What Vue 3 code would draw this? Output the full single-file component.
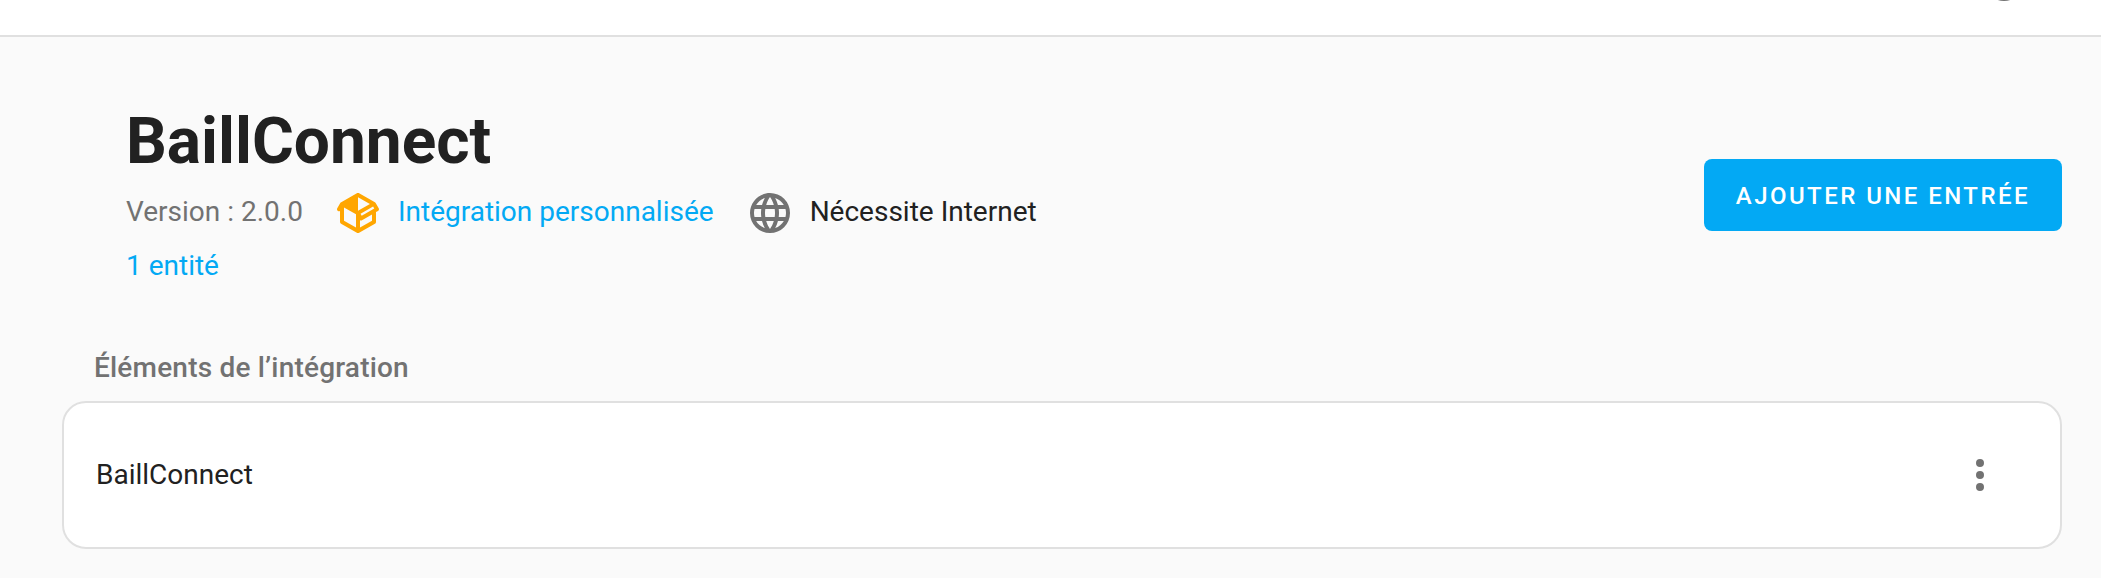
<template>
  <div class="page">
    <header class="toolbar">
      <svg class="toolbar__help" viewBox="0 0 24 24">
        <circle cx="12" cy="12" r="10" />
      </svg>
    </header>

    <main class="content">
      <section class="integration">
        <div class="integration__info">
          <h1 class="title">BaillConnect</h1>
          <div class="details">
            <span class="version">Version : {{ version }}</span>
            <span class="detail detail--custom">
              <svg class="icon" viewBox="0 0 24 24">
                <path :d="icons.package" />
              </svg>
              <a class="link">Intégration personnalisée</a>
            </span>
            <span class="detail">
              <svg class="icon" viewBox="0 0 24 24">
                <path :d="icons.web" />
              </svg>
              <span>Nécessite Internet</span>
            </span>
          </div>
          <a class="link entities">1 entité</a>
        </div>
        <button class="add">Ajouter une entrée</button>
      </section>

      <h2 class="subtitle">Éléments de l’intégration</h2>
      <div v-for="entry in entries" :key="entry" class="card">
        <span class="card__name">{{ entry }}</span>
        <button class="menu" aria-label="Menu">
          <svg class="icon" viewBox="0 0 24 24">
            <path :d="icons.dots" />
          </svg>
        </button>
      </div>
    </main>
  </div>
</template>

<script setup>
const version = "2.0.0";
const entries = ["BaillConnect"];

const icons = {
  package: "M2,10.96C1.5,10.68 1.35,10.07 1.63,9.59L3.13,7C3.24,6.8 3.41,6.66 3.6,6.58L11.43,2.18C11.59,2.06 11.79,2 12,2C12.21,2 12.41,2.06 12.57,2.18L20.47,6.62C20.66,6.72 20.82,6.88 20.91,7.08L22.36,9.6C22.64,10.08 22.47,10.69 22,10.96L21,11.54V16.5C21,16.88 20.79,17.21 20.47,17.38L12.57,21.82C12.41,21.94 12.21,22 12,22C11.79,22 11.59,21.94 11.43,21.82L3.53,17.38C3.21,17.21 3,16.88 3,16.5V10.96C2.7,11.13 2.32,11.14 2,10.96M12,4.15V4.15L12,10.85V10.85L17.96,7.5L12,4.15M5,15.91L11,19.29V12.58L5,9.21V15.91M19,15.91V12.69L14,15.59C13.67,15.77 13.3,15.76 13,15.6V19.29L19,15.91M13.85,13.36L20.13,9.73L19.55,8.72L13.27,12.35L13.85,13.36Z",
  web: "M16.36,14C16.44,13.34 16.5,12.68 16.5,12C16.5,11.32 16.44,10.66 16.36,10H19.74C19.9,10.64 20,11.31 20,12C20,12.69 19.9,13.36 19.74,14M14.59,19.56C15.19,18.45 15.65,17.25 15.97,16H18.92C17.96,17.65 16.43,18.93 14.59,19.56M14.34,14H9.66C9.56,13.34 9.5,12.68 9.5,12C9.5,11.32 9.56,10.65 9.66,10H14.34C14.43,10.65 14.5,11.32 14.5,12C14.5,12.68 14.43,13.34 14.34,14M12,19.96C11.17,18.76 10.5,17.43 10.09,16H13.91C13.5,17.43 12.83,18.76 12,19.96M8,8H5.08C6.03,6.34 7.57,5.06 9.4,4.44C8.8,5.55 8.35,6.75 8,8M5.08,16H8C8.35,17.25 8.8,18.45 9.4,19.56C7.57,18.93 6.03,17.65 5.08,16M4.26,14C4.1,13.36 4,12.69 4,12C4,11.31 4.1,10.64 4.26,10H7.64C7.56,10.66 7.5,11.32 7.5,12C7.5,12.68 7.56,13.34 7.64,14M12,4.03C12.83,5.23 13.5,6.57 13.91,8H10.09C10.5,6.57 11.17,5.23 12,4.03M18.92,8H15.97C15.65,6.75 15.19,5.55 14.59,4.44C16.43,5.07 17.96,6.34 18.92,8M12,2C6.47,2 2,6.5 2,12A10,10 0 0,0 12,22A10,10 0 0,0 22,12A10,10 0 0,0 12,2Z",
  dots: "M12,16A2,2 0 0,1 14,18A2,2 0 0,1 12,20A2,2 0 0,1 10,18A2,2 0 0,1 12,16M12,10A2,2 0 0,1 14,12A2,2 0 0,1 12,14A2,2 0 0,1 10,12A2,2 0 0,1 12,10M12,4A2,2 0 0,1 14,6A2,2 0 0,1 12,8A2,2 0 0,1 10,6A2,2 0 0,1 12,4Z",
};
</script>

<style>
body {
  background: #fafafa;
}
</style>

<style scoped>
.page {
  box-sizing: border-box;
  height: 578px;
  overflow: hidden;
  background: #fafafa;
  color: #212121;
  font-family: Roboto, sans-serif;
  font-size: 28px;
}

.toolbar {
  display: flex;
  box-sizing: border-box;
  justify-content: flex-end;
  align-items: flex-start;
  height: 37px;
  padding-right: 73px;
  border-bottom: 2px solid #e0e0e0;
  background: #fff;
}

.toolbar__help {
  width: 48px;
  height: 48px;
  margin-top: -43px;
  fill: #727272;
}

.content {
  padding: 0 39px 0 62px;
}

.integration {
  display: flex;
  align-items: center;
  justify-content: space-between;
  height: 240px;
  padding: 38px 0 0 64px;
}

.integration__info {
  padding-top: 2px;
}

.title {
  margin: 0;
  font-size: 64px;
  font-weight: 700;
  line-height: 80px;
}

.details {
  display: flex;
  box-sizing: border-box;
  align-items: center;
  height: 60px;
  padding-bottom: 2px;
  gap: 32px;
}

.version {
  color: #727272;
}

.detail {
  display: flex;
  align-items: center;
  gap: 16px;
}

.icon {
  width: 48px;
  height: 48px;
  fill: #727272;
}

.detail .icon {
  margin-top: 4px;
}

.detail--custom .icon {
  margin-left: -1px;
  fill: #ffa600;
}

.link {
  color: #03a9f4;
}

.entities {
  display: block;
  line-height: 48px;
}

.add {
  height: 72px;
  border: none;
  border-radius: 8px;
  padding: 2px 32px 0;
  background: #03a9f4;
  color: #fff;
  font-family: inherit;
  font-size: 24px;
  font-weight: 500;
  letter-spacing: 2.45px;
  text-transform: uppercase;
}

.subtitle {
  margin: 29px 0 0 32px;
  font-size: 28px;
  font-weight: 500;
  letter-spacing: 0.2px;
  line-height: 48px;
  color: #727272;
}

.card {
  display: flex;
  box-sizing: border-box;
  align-items: center;
  justify-content: space-between;
  height: 148px;
  margin-top: 9px;
  border: 2px solid #e0e0e0;
  border-radius: 24px;
  padding: 0 56px 0 32px;
  background: #fff;
}

.card__name {
  padding-bottom: 2px;
}

.menu {
  display: flex;
  border: none;
  padding: 0;
  background: none;
}
</style>
